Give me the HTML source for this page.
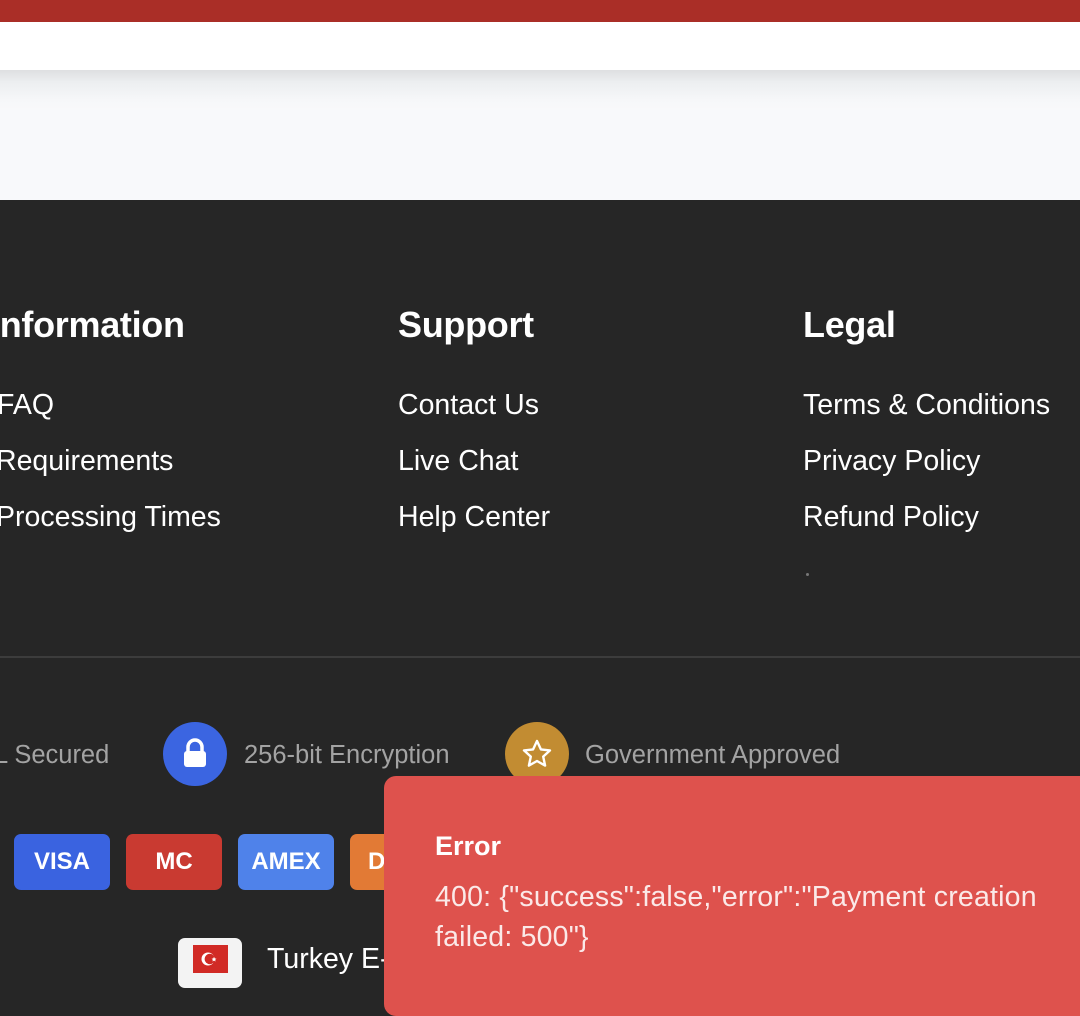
<!DOCTYPE html>
<html><head><meta charset="utf-8"><style>
*{margin:0;padding:0;box-sizing:border-box}
body{width:1080px;height:982px;overflow:hidden;position:relative;background:#262626;font-family:"Liberation Sans",sans-serif}
.a{position:absolute;white-space:nowrap}
.h{font-size:36px;font-weight:bold;color:#fff;letter-spacing:-0.3px}
.l{font-size:28.5px;color:#fff;letter-spacing:0}
.b{font-size:25.5px;color:#a3a3a3}
.c{position:absolute;width:64px;height:64px;border-radius:50%;top:722px}
.card{position:absolute;top:834px;width:96px;height:56px;border-radius:7px;color:#fff;font-weight:bold;font-size:24px;display:flex;align-items:center;justify-content:center}
</style></head><body>
<div class="a" style="left:0;top:0;width:1080px;height:22px;background:#aa2e27"></div>
<div class="a" style="left:0;top:22px;width:1080px;height:48px;background:#fff"></div>
<div class="a" style="left:0;top:70px;width:1080px;height:130px;background:linear-gradient(#dedfe1 0px,#eceef0 12px,#f6f7f9 30px,#f8f9fb 40px)"></div>

<div class="a h" style="left:-10px;top:304px">Information</div>
<div class="a h" style="left:398px;top:304px">Support</div>
<div class="a h" style="left:803px;top:304px">Legal</div>

<div class="a l" style="left:-3px;top:389px">FAQ</div>
<div class="a l" style="left:-4px;top:445px">Requirements</div>
<div class="a l" style="left:-4px;top:501px">Processing Times</div>
<div class="a l" style="left:398px;top:389px">Contact Us</div>
<div class="a l" style="left:398px;top:445px">Live Chat</div>
<div class="a l" style="left:398px;top:501px">Help Center</div>
<div class="a l" style="left:803px;top:389px">Terms &amp; Conditions</div>
<div class="a l" style="left:803px;top:445px">Privacy Policy</div>
<div class="a l" style="left:803px;top:501px">Refund Policy</div>
<div class="a" style="left:806px;top:573px;width:3px;height:3px;border-radius:50%;background:#777"></div>

<div class="a" style="left:0;top:656px;width:1080px;height:2px;background:#3c3c3c"></div>

<div class="a b" style="left:-6px;top:741px">L Secured</div>
<div class="c" style="left:163px;background:#3b65e1"><svg width="64" height="64" viewBox="0 0 64 64"><path d="M25 30v-5a7 7 0 0 1 14 0v5" fill="none" stroke="#fff" stroke-width="3.5"/><rect x="21" y="29" width="22" height="16" rx="3" fill="#fff"/></svg></div>
<div class="a b" style="left:244px;top:741px">256-bit Encryption</div>
<div class="c" style="left:505px;background:#c28c32"><svg width="64" height="64" viewBox="0 0 64 64"><path d="M32 19l3.9 8.4 9.1 1-6.8 6.2 1.9 9-8.1-4.6-8.1 4.6 1.9-9-6.8-6.2 9.1-1z" fill="none" stroke="#fff" stroke-width="2.4" stroke-linejoin="round"/></svg></div>
<div class="a b" style="left:585px;top:741px">Government Approved</div>

<div class="card" style="left:14px;background:#3a63e0">VISA</div>
<div class="card" style="left:126px;background:#c93a31">MC</div>
<div class="card" style="left:238px;background:#4f82ea">AMEX</div>
<div class="card" style="left:350px;background:#e27a35;justify-content:flex-start;padding-left:18px">D</div>

<div class="a" style="left:178px;top:938px;width:64px;height:50px;border-radius:7px;background:#f3f3f3"></div>
<div class="a" style="left:193px;top:945px;width:35px;height:28px;background:#d12a25"><svg width="35" height="28" viewBox="0 0 35 28"><circle cx="15" cy="14" r="6.5" fill="#fff"/><circle cx="16.8" cy="14" r="5.2" fill="#d12a25"/><path d="M21 11.8l.8 1.6 1.7.3-1.3 1.1.4 1.7-1.6-.9-1.5.9.3-1.7-1.2-1.1 1.7-.3z" fill="#fff"/></svg></div>
<div class="a l" style="left:267px;top:943px">Turkey E-</div>

<div class="a" style="left:384px;top:776px;width:720px;height:240px;border-radius:12px;background:#de524d"></div>
<div class="a" style="left:435px;top:831px;font-size:27px;font-weight:bold;color:#fff">Error</div>
<div class="a" style="left:435px;top:877px;font-size:28.5px;color:#fbe9e8;letter-spacing:0.2px;line-height:40px;white-space:normal;width:630px">400: {"success":false,"error":"Payment creation failed: 500"}</div>
</body></html>
